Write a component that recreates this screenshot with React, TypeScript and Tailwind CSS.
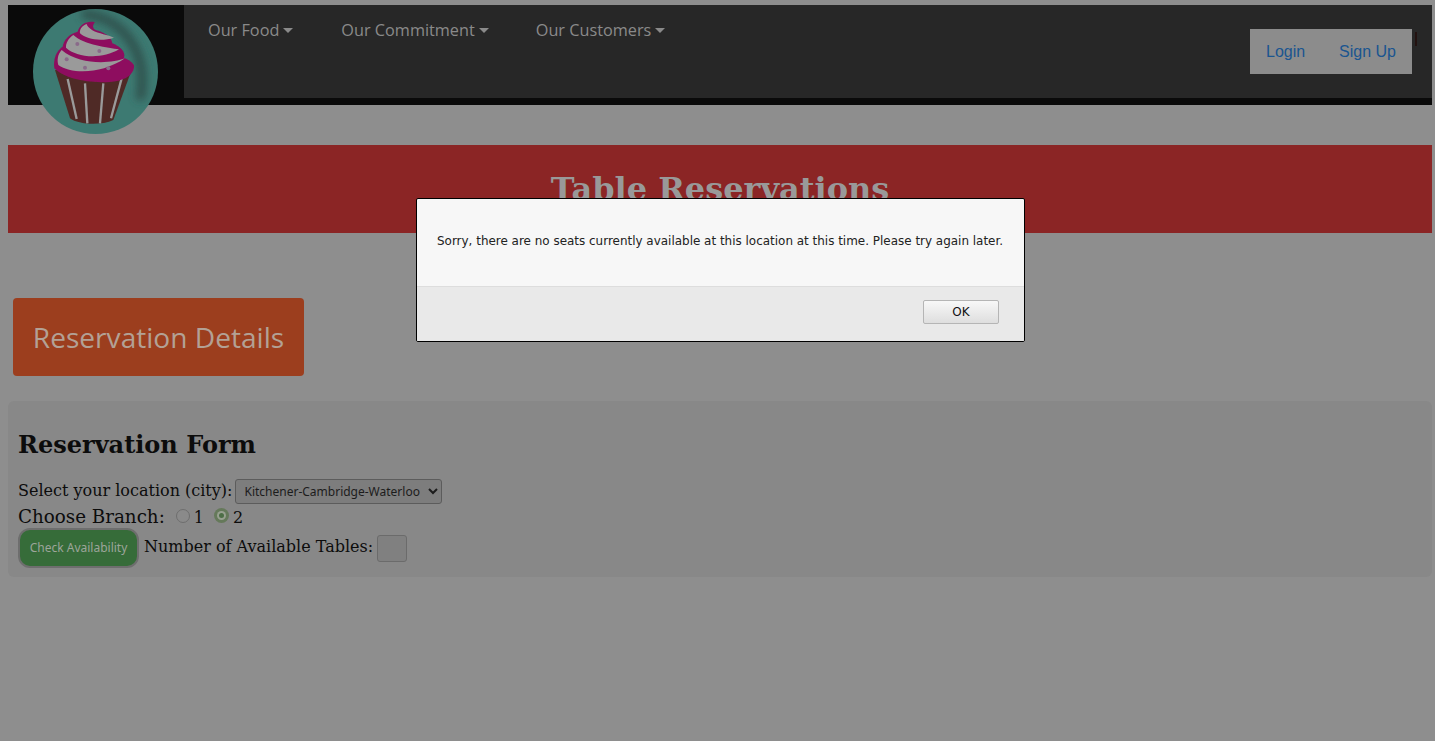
export default function App() {
  const navItem = "flex items-center gap-1 text-[16.25px] leading-6 text-[#8a8a8a]";
  const caret = (
    <svg width="10" height="5" viewBox="0 0 10 5" className="mt-px">
      <path d="M0 0h10L5 5z" fill="#8a8a8a" />
    </svg>
  );
  return (
    <div className="relative h-[741px] overflow-hidden bg-[#8e8e8e] pl-2 pr-[3px] pt-[5px] font-['Liberation_Serif',serif]">
      <header className="relative flex h-[100px] bg-[#0a0a0a] pb-[7px]">
        <div className="relative w-[176px] shrink-0">
          <svg width="125" height="125" viewBox="33 9 125 125" className="absolute left-[25px] top-[4px]">
            <defs>
              <filter id="b" x="-30%" y="-30%" width="160%" height="160%">
                <feGaussianBlur stdDeviation="4" />
              </filter>
              <filter id="s" x="-5%" y="-5%" width="110%" height="110%">
                <feGaussianBlur stdDeviation="1.2" />
              </filter>
              <clipPath id="c">
                <circle cx="95.5" cy="71.5" r="62.5" />
              </clipPath>
            </defs>
            <circle cx="95.5" cy="71.5" r="62.5" fill="#3d7a72" />
            <g clipPath="url(#c)">
              <path d="M82 14C122 16 150 52 140 100" stroke="#2f4f4c" strokeWidth="9" fill="none" filter="url(#b)" />
            </g>
            <g transform="translate(45 15) scale(0.3333)" filter="url(#s)">
              <path d="M30 165L75 310C100 330 170 332 205 315L258 170Z" fill="#4f2a26" />
              <g stroke="#9a9a9a" strokeWidth="7" fill="none">
                <path d="M68 192L95 312" />
                <path d="M120 205L127 325" />
                <path d="M175 205L165 325" />
                <path d="M230 190L198 310" />
              </g>
              <path
                d="M150 22C125 16 103 30 98 50C73 56 56 75 53 95C36 105 24 130 28 160C60 194 150 210 220 197C252 190 270 170 267 150C260 138 247 132 237 128C244 110 222 92 202 85C200 62 172 50 152 45C142 40 142 30 150 22Z"
                fill="#8e0f5e"
              />
              <path d="M125 27C110 32 103 45 105 55C125 74 170 80 207 68C190 60 160 56 142 46C132 38 126 34 125 27Z" fill="#9a9a9a" />
              <path d="M85 60C70 70 62 85 63 98C95 128 170 134 222 103C190 98 118 90 85 60Z" fill="#9a9a9a" />
              <path d="M50 105C38 118 36 135 40 150C80 178 170 178 240 130C200 146 105 152 50 105Z" fill="#9a9a9a" />
              <g fill="#8a6a8a">
                <circle cx="97" cy="87" r="6" />
                <circle cx="65" cy="133" r="6" />
                <circle cx="120" cy="158" r="6" />
                <circle cx="163" cy="108" r="6" />
                <circle cx="190" cy="160" r="6" />
              </g>
            </g>
          </svg>
        </div>
        <nav className="flex flex-1 items-start justify-between bg-[#272727] font-['Open_Sans',sans-serif]">
          <div className="flex pl-6 pt-[13px]">
            <span className={`${navItem} mr-[48px]`}>Our Food{caret}</span>
            <span className={`${navItem} mr-[47px]`}>Our Commitment{caret}</span>
            <span className={navItem}>Our Customers{caret}</span>
          </div>
          <div className="flex items-start">
            <div className="mt-6 flex h-[45px] w-[162px] items-center justify-between bg-[#8c8c8c] px-4 font-['Liberation_Sans',sans-serif] text-[16px] text-[#1a5590]">
              <span>Login</span>
              <span>Sign Up</span>
            </div>
            <div className="ml-[3px] mr-[15px] mt-[27px] h-[14px] w-[2px] bg-[#231210]" />
          </div>
        </nav>
      </header>

      <div className="mt-10 flex h-[88px] justify-center bg-[#8b2525] pt-[22px] font-['DejaVu_Serif',serif] text-[32px] font-bold leading-[44px] text-[#999999]">
        Table Reservations
      </div>

      <div className="ml-[5px] mt-[65px] flex h-[78px] w-[291px] items-center justify-center rounded-[4px] bg-[#9c3e1e] font-['Open_Sans',sans-serif] text-[28.1px] text-[#b3a195]">
        Reservation Details
      </div>

      <section className="mt-[25px] h-[176px] rounded-[6px] bg-[#888888] px-2.5 pt-[26px] font-['DejaVu_Serif',serif] text-[#0c0c0c]">
        <h2 className="text-[24px] font-bold leading-[36px]">Reservation Form</h2>
        <div className="mt-[15px] flex h-[26px] items-center text-[16px]">
          Select your location (city):
          <select className="ml-[3px] h-[25px] w-[207px] rounded-[3px] border border-[#5c5c5c] bg-[#7d7d7d] pl-1 font-['Noto_Sans',sans-serif] text-[12px] text-[#1c1c1c]">
            <option>Kitchener-Cambridge-Waterloo</option>
          </select>
        </div>
        <div className="-mt-px flex h-[25px] items-baseline text-[18.3px]">
          Choose Branch:
          <span className="ml-[11px] h-[14px] w-[14px] self-center rounded-full border border-[#6e6e6e] bg-[#8a8a8a]" />
          <span className="ml-[4px] text-[16px]">1</span>
          <span className="ml-[10px] flex h-[15px] w-[15px] items-center justify-center self-center rounded-full bg-[#65795a]">
            <span className="flex h-[9px] w-[9px] items-center justify-center rounded-full bg-[#98a090]">
              <span className="h-[5px] w-[5px] rounded-full bg-[#4d6e46]" />
            </span>
          </span>
          <span className="ml-[4px] text-[16px]">2</span>
        </div>
        <div className="flex items-center text-[16px]">
          <div className="flex h-[40px] w-[121px] items-center justify-center rounded-[12px] border-2 border-[#6e6e6e] bg-[#366c39] font-['Noto_Sans',sans-serif] text-[12px] text-[#9da59a]">
            Check Availability
          </div>
          <span className="mb-[2px] ml-[5px]">Number of Available Tables:</span>
          <span className="ml-[4px] h-[27px] w-[30px] rounded-[3px] border border-[#6b6b6b] bg-[#808080]" />
        </div>
      </section>

      <div className="absolute left-[416px] top-[198px] w-[609px] overflow-hidden rounded-[2px] border border-black bg-[#f7f7f7] font-['DejaVu_Sans',sans-serif]">
        <div className="flex h-[87px] items-center whitespace-nowrap px-5 pb-px text-[11.96px] text-[#222222]">
          Sorry, there are no seats currently available at this location at this time. Please try again later.
        </div>
        <div className="flex h-[55px] items-center justify-end border-t border-[#dddddd] bg-[#e9e9e9] pb-[4px] pr-[25px]">
          <div className="flex h-6 w-[76px] items-center justify-center rounded-[2px] border border-[#b5b5b5] bg-gradient-to-b from-[#f8f8f8] to-[#dedede] text-[12px] text-[#111111]">
            OK
          </div>
        </div>
      </div>
    </div>
  );
}
